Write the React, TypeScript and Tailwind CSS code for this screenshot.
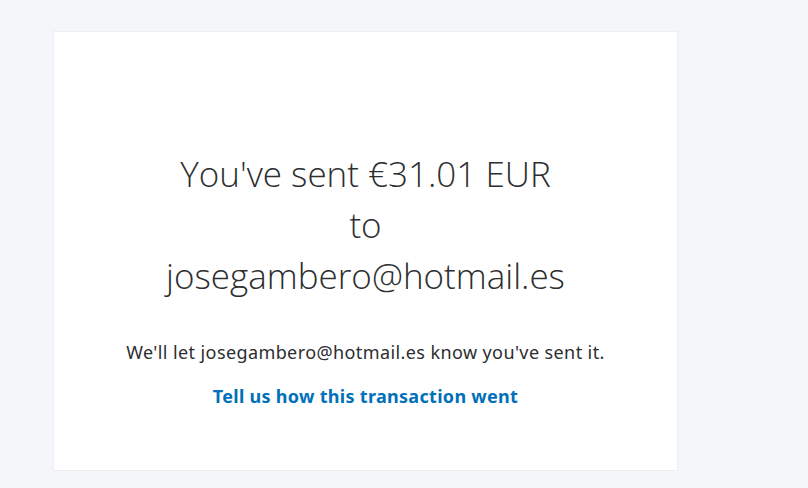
export default function App() {
  return (
    <div className="min-h-[488px] w-full bg-[#f5f6fa] pt-[31px] pl-[53px]">
      <div className="flex h-[440px] w-[625px] flex-col items-center border border-[#eceef2] bg-white pt-[116px] text-center font-['Noto_Sans',sans-serif]">
        <h1 className="font-['Open_Sans',sans-serif] text-[35px] leading-[51px] font-light text-[#2c2e2f]">
          You've sent €31.01 EUR
          <br />
          to
          <br />
          josegambero@hotmail.es
        </h1>
        <p className="mt-[39px] text-[18px] leading-[24px] tracking-[0.4px] text-[#2c2e2f]">
          We'll let josegambero@hotmail.es know you've sent it.
        </p>
        <a className="mt-[20px] text-[18px] leading-[24px] font-bold tracking-[0.3px] text-[#0070ba]">
          Tell us how this transaction went
        </a>
      </div>
    </div>
  );
}
